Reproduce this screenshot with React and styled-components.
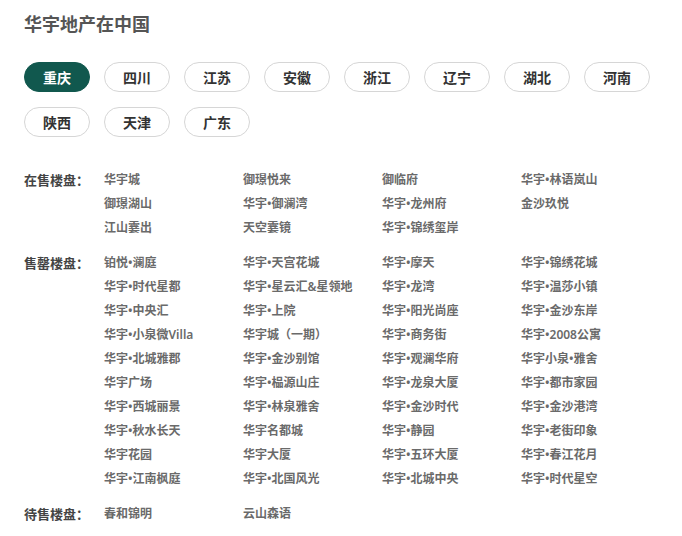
import React from "react";
import styled, { createGlobalStyle } from "styled-components";

const Global = createGlobalStyle`
  html, body { margin: 0; padding: 0; background: #fff; }
  body { font-family: "Noto Sans", "Noto Sans CJK SC", sans-serif; }
`;

const Page = styled.div`
  padding: 12px 0 0 24px;
  width: 658px;
`;

const Title = styled.h2`
  margin: 0;
  font-size: 18px;
  line-height: 25px;
  font-weight: 700;
  color: #555;
`;

const Pills = styled.div`
  display: flex;
  flex-wrap: wrap;
  column-gap: 14px;
  row-gap: 15px;
  margin-top: 25px;
  width: 652px;
`;

const Pill = styled.button`
  box-sizing: border-box;
  width: 66px;
  height: 30px;
  border-radius: 15px;
  border: 1px solid ${(p) => (p.$active ? "#11584e" : "#d6d6d6")};
  background: ${(p) => (p.$active ? "#11584e" : "#fff")};
  color: ${(p) => (p.$active ? "#fff" : "#333")};
  font-family: inherit;
  font-size: 14px;
  font-weight: 700;
  padding: 0;
  cursor: pointer;
`;

const Sections = styled.div`
  margin-top: 31px;
  display: flex;
  flex-direction: column;
  gap: 11px;
`;

const Section = styled.div`
  display: grid;
  grid-template-columns: 80px 1fr;
`;

const Label = styled.div`
  font-size: 13px;
  line-height: 24px;
  font-weight: 700;
  color: #444;
`;

const Items = styled.div`
  display: grid;
  grid-template-columns: repeat(4, 139px);
`;

const Item = styled.a`
  font-size: 12px;
  line-height: 24px;
  font-weight: 600;
  color: #6a6a6a;
  text-decoration: none;
  white-space: nowrap;
`;

const provinces = ["重庆", "四川", "江苏", "安徽", "浙江", "辽宁", "湖北", "河南", "陕西", "天津", "广东"];

const sections = [
  {
    label: "在售楼盘：",
    items: ["华宇城", "御璟悦来", "御临府", "华宇•林语岚山", "御璟湖山", "华宇•御澜湾", "华宇•龙州府", "金沙玖悦", "江山霎出", "天空霎镜", "华宇•锦绣玺岸"],
  },
  {
    label: "售罄楼盘：",
    items: [
      "铂悦•澜庭", "华宇•天宫花城", "华宇•摩天", "华宇•锦绣花城",
      "华宇•时代星都", "华宇•星云汇&星领地", "华宇•龙湾", "华宇•温莎小镇",
      "华宇•中央汇", "华宇•上院", "华宇•阳光尚座", "华宇•金沙东岸",
      "华宇•小泉微Villa", "华宇城（一期）", "华宇•商务街", "华宇•2008公寓",
      "华宇•北城雅郡", "华宇•金沙别馆", "华宇•观澜华府", "华宇小泉•雅舍",
      "华宇广场", "华宇•榀源山庄", "华宇•龙泉大厦", "华宇•都市家园",
      "华宇•西城丽景", "华宇•林泉雅舍", "华宇•金沙时代", "华宇•金沙港湾",
      "华宇•秋水长天", "华宇名都城", "华宇•静园", "华宇•老街印象",
      "华宇花园", "华宇大厦", "华宇•五环大厦", "华宇•春江花月",
      "华宇•江南枫庭", "华宇•北国风光", "华宇•北城中央", "华宇•时代星空",
    ],
  },
  { label: "待售楼盘：", items: ["春和锦明", "云山森语"] },
];

export default function App() {
  return (
    <>
      <Global />
      <Page>
        <Title>华宇地产在中国</Title>
        <Pills>
          {provinces.map((p, i) => (
            <Pill key={p} $active={i === 0}>{p}</Pill>
          ))}
        </Pills>
        <Sections>
          {sections.map((s) => (
            <Section key={s.label}>
              <Label>{s.label}</Label>
              <Items>
                {s.items.map((it, i) => (
                  <Item key={i}>{it}</Item>
                ))}
              </Items>
            </Section>
          ))}
        </Sections>
      </Page>
    </>
  );
}
